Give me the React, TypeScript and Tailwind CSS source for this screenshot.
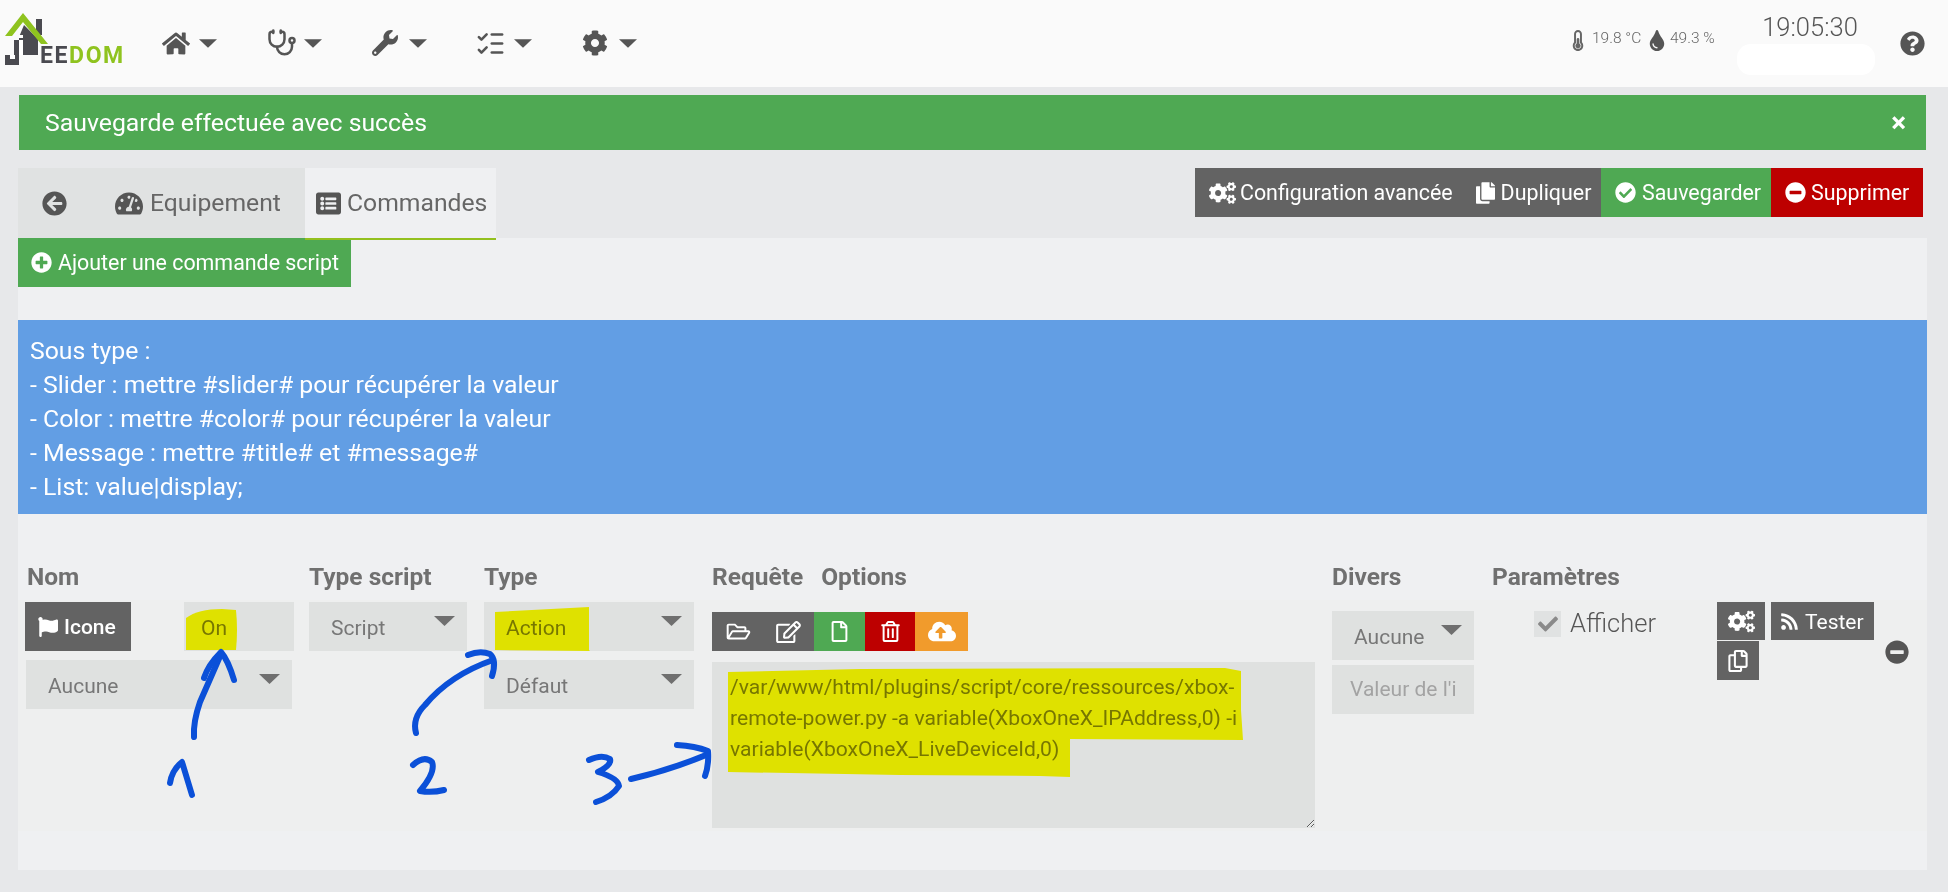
import type { ReactNode } from 'react';
import {
  FaArrowCircleLeft, FaCheck, FaCheckCircle, FaCloudUploadAlt, FaCog, FaCogs, FaCopy, FaFlag, FaHome,
  FaListAlt, FaMinusCircle, FaPlusCircle, FaQuestionCircle, FaRegCopy, FaRegEdit, FaRegFile,
  FaRegFolderOpen, FaRegTrashAlt, FaRss, FaTachometerAlt, FaThermometerHalf, FaTint, FaWrench,
} from 'react-icons/fa';
import { ListChecks, Stethoscope } from 'lucide-react';

const rowGrid = 'grid grid-cols-[284px_175px_228px_620px_160px_225px_1fr] pl-[7px]';

const Caret = ({ className }: { className: string }) => (
  <svg viewBox="0 0 21 10" className={className} fill="currentColor">
    <polygon points="0,0 21,0 10.5,10" />
  </svg>
);

const Logo = () => (
  <div className="relative mt-[-10px] h-[52px] w-[157px] shrink-0">
    <svg viewBox="0 0 50 52" className="absolute left-0 top-0 h-[52px] w-[50px]">
      <rect x="31" y="6" width="6" height="16" fill="#4a4a50" />
      <polygon points="19,12 33,26 33,42 14,42 14,24" fill="#4a4a50" />
      <rect x="14" y="22" width="4" height="3" fill="#fff" />
      <rect x="14" y="27" width="4" height="15" fill="#fff" />
      <rect x="9" y="27" width="5" height="25" fill="#4a4a50" />
      <rect x="0" y="42" width="14" height="10" fill="#4a4a50" />
      <rect x="5" y="42" width="5" height="4" fill="#fff" />
      <polygon points="18,0 43,31 36,31 18,9 7,23 0,23" fill="#8fc31f" />
    </svg>
    <span className="absolute left-[35px] top-[31px] text-[23px] font-bold leading-[23px] tracking-[1.6px] text-[#4a4a50]">
      EE<span className="text-[#8fc31f]">DOM</span>
    </span>
  </div>
);

const NavItem = ({ children }: { children: ReactNode }) => (
  <div className="flex w-[105px] items-center text-[#555555]">
    <div className="flex w-[37px] items-center">{children}</div>
    <Caret className="h-[9px] w-[18px]" />
  </div>
);

const Btn = ({ className, children }: { className: string; children: ReactNode }) => (
  <div className={`flex items-center text-white ${className}`}>{children}</div>
);

const Field = ({ className, label }: { className: string; label: string }) => (
  <div className={`relative flex h-[49px] items-center bg-[#dfe1e0] text-[21px] text-[#777777] ${className}`}>
    <span className="mt-[4px]">{label}</span>
    <Caret className="absolute right-[12px] top-[14px] h-[10px] w-[21px] text-[#6f6f6f]" />
  </div>
);

export default function App() {
  return (
    <div className="relative h-[892px] overflow-hidden bg-[#e7e8ea] font-['Roboto',sans-serif]">
      {/* Navbar */}
      <header className="flex h-[87px] items-center bg-[#fafafa] pl-[5px] pr-[23px]">
        <Logo />
        <nav className="mt-[-1px] flex">
          <NavItem><FaHome className="h-[25px] w-[28px]" /></NavItem>
          <NavItem><Stethoscope className="h-[30px] w-[30px]" strokeWidth={2} /></NavItem>
          <NavItem><FaWrench className="h-[26px] w-[26px]" /></NavItem>
          <NavItem><ListChecks className="ml-[-2px] h-[31px] w-[31px]" strokeWidth={2} /></NavItem>
          <NavItem><FaCog className="h-[26px] w-[26px]" /></NavItem>
        </nav>
        <div className="ml-auto flex items-center text-[#666666]">
          <div className="mt-[-6px] flex items-center text-[15.5px] font-light">
            <FaThermometerHalf className="h-[21px] w-[12px]" />
            <span className="ml-[8px] mt-[-4px] w-[57px]">19.8 °C</span>
            <FaTint className="h-[21px] w-[16px] text-[#555555]" />
            <span className="ml-[5px] mt-[-4px] w-[67px]">49.3 %</span>
          </div>
          <div className="flex w-[138px] flex-col items-center">
            <span className="ml-[8px] text-[25.5px] font-light leading-[30px] text-[#555555]">19:05:30</span>
            <div className="mt-[2px] h-[31px] w-[138px] rounded-[14px] bg-white" />
          </div>
          <FaQuestionCircle className="ml-[25px] h-[25px] w-[25px] text-[#555555]" />
        </div>
      </header>

      <main className="pl-[18px] pr-[21px] pt-[8px]">
        {/* Alert */}
        <div className="mx-px flex h-[55px] items-center justify-between bg-[#4fa953] pl-[26px] pr-[20px] text-white">
          <span className="text-[24.8px]">Sauvegarde effectuée avec succès</span>
          <span className="text-[28px] font-bold">×</span>
        </div>

        {/* Tabs + actions */}
        <div className="mt-[18px] flex h-[70px] justify-between">
          <div className="flex">
            <div className="flex w-[287px] items-center bg-[#e0e2e2] pl-[24px] text-[#666666]">
              <FaArrowCircleLeft className="h-[25px] w-[25px] text-[#555555]" />
              <FaTachometerAlt className="ml-[48px] h-[25px] w-[28px] text-[#555555]" />
              <span className="ml-[7px] text-[24.7px]">Equipement</span>
            </div>
            <div className="z-10 flex h-[72px] w-[191px] items-center border-b-2 border-[#93c01f] bg-[#eff0f2] pl-[11px] text-[#666666]">
              <FaListAlt className="h-[25px] w-[25px] text-[#555555]" />
              <span className="ml-[6px] text-[24.7px]">Commandes</span>
            </div>
          </div>
          <div className="mr-[4px] flex h-[49px] text-[21.4px]">
            <Btn className="w-[406px] bg-[#636363] pl-[14px]">
              <FaCogs className="h-[24px] w-[27px]" />
              <span className="ml-[4px] mt-[2px]">Configuration avancée</span>
              <FaCopy className="ml-[23px] h-[22px] w-[19px]" />
              <span className="ml-[6px] mt-[2px]">Dupliquer</span>
            </Btn>
            <Btn className="w-[170px] bg-[#4fa953] pl-[14px]">
              <FaCheckCircle className="h-[21px] w-[21px]" />
              <span className="ml-[6px] mt-[2px]">Sauvegarder</span>
            </Btn>
            <Btn className="w-[152px] bg-[#bd0000] pl-[14px]">
              <FaMinusCircle className="h-[21px] w-[21px]" />
              <span className="ml-[5px] mt-[2px]">Supprimer</span>
            </Btn>
          </div>
        </div>

        {/* Panel */}
        <section className="h-[632px] bg-[#eff0f2]">
          <Btn className="h-[49px] w-[333px] bg-[#4fa953] pl-[13px] text-[21.4px]">
            <FaPlusCircle className="h-[21px] w-[21px]" />
            <span className="ml-[6px] mt-[2px]">Ajouter une commande script</span>
          </Btn>

          <div className="mt-[33px] h-[194px] bg-[#629ee4] pl-[12px] pt-[14px] text-[24.8px] leading-[34px] text-white">
            <p>Sous type :</p>
            <p>- Slider : mettre #slider# pour récupérer la valeur</p>
            <p>- Color : mettre #color# pour récupérer la valeur</p>
            <p>- Message : mettre #title# et #message#</p>
            <p>- List: value|display;</p>
          </div>

          {/* Command table */}
          <div className={`${rowGrid} h-[86px] items-end pb-[4px] text-[24.5px] font-bold text-[#707070]`}>
            <span className="ml-[2px]">Nom</span>
            <span>Type script</span>
            <span>Type</span>
            <span className="flex">
              <span>Requête</span>
              <span className="ml-[18px]">Options</span>
            </span>
            <span>Divers</span>
            <span>Paramètres</span>
          </div>

          <div className={`${rowGrid} h-[231px] bg-[#eeefef] pt-[2px]`}>
            <div className="w-[269px]">
              <div className="flex justify-between">
                <Btn className="h-[49px] w-[106px] bg-[#636363] pl-[13px] text-[21px] font-medium">
                  <FaFlag className="h-[20px] w-[20px]" />
                  <span className="ml-[6px] mt-[2px]">Icone</span>
                </Btn>
                <div className="flex h-[49px] w-[110px] items-center bg-[#dfe1e0] pl-[17px] text-[21px] text-[#777777]">
                  <span className="mt-[4px]">On</span>
                </div>
              </div>
              <Field className="ml-px mt-[9px] w-[266px] pl-[22px]" label="Aucune" />
            </div>

            <Field className="w-[158px] pl-[22px]" label="Script" />

            <div className="w-[210px]">
              <Field className="pl-[22px]" label="Action" />
              <Field className="mt-[9px] pl-[22px]" label="Défaut" />
            </div>

            <div className="w-[603px] pt-[10px]">
              <div className="flex h-[39px] text-white">
                <div className="flex w-[102px] items-center bg-[#636363] pl-[14px]">
                  <FaRegFolderOpen className="h-[21px] w-[25px]" />
                  <FaRegEdit className="ml-[25px] h-[22px] w-[25px]" />
                </div>
                <div className="flex w-[51px] items-center justify-center bg-[#4fa953]"><FaRegFile className="h-[21px] w-[17px]" /></div>
                <div className="flex w-[50px] items-center justify-center bg-[#bd0000]"><FaRegTrashAlt className="h-[21px] w-[19px]" /></div>
                <div className="flex w-[53px] items-center justify-center bg-[#f19b2c]"><FaCloudUploadAlt className="h-[23px] w-[28px]" /></div>
              </div>
              <textarea
                readOnly
                className="mt-[11px] block h-[166px] w-[603px] bg-[#dfe1e0] pb-0 pl-[18px] pr-[50px] pt-[9px] text-[21.1px] leading-[31px] text-[#777777] outline-none"
                value="/var/www/html/plugins/script/core/ressources/xbox-remote-power.py -a variable(XboxOneX_IPAddress,0) -i variable(XboxOneX_LiveDeviceId,0)"
              />
            </div>

            <div className="w-[142px] pt-[9px]">
              <Field className="pl-[22px]" label="Aucune" />
              <div className="mt-[5px] flex h-[49px] items-center overflow-hidden whitespace-nowrap bg-[#dfe1e0] pl-[18px] text-[21px] text-[#a3a3a3]">
                Valeur de l'i
              </div>
            </div>

            <div className="flex items-start pl-[42px] pt-[9px]">
              <div className="flex h-[26px] w-[27px] items-center justify-center bg-[#e0e2e2]">
                <FaCheck className="h-[20px] w-[24px] text-[#8a8a8a]" />
              </div>
              <span className="ml-[9px] mt-[-1px] text-[25.5px] font-light leading-[26px] text-[#555555]">Afficher</span>
            </div>

            <div className="relative flex w-[195px] flex-wrap content-start text-[21px]">
              <Btn className="h-[38px] w-[48px] justify-center bg-[#636363]"><FaCogs className="h-[23px] w-[27px]" /></Btn>
              <Btn className="ml-[6px] h-[38px] w-[103px] bg-[#636363] pl-[9px]">
                <FaRss className="h-[19px] w-[19px]" />
                <span className="ml-[6px] mt-[3px]">Tester</span>
              </Btn>
              <Btn className="mt-px h-[39px] w-[42px] justify-center bg-[#636363]"><FaRegCopy className="h-[22px] w-[22px]" /></Btn>
              <FaMinusCircle className="absolute left-[168px] top-[38px] h-[24px] w-[24px] text-[#555555]" />
            </div>
          </div>
        </section>
      </main>

      {/* Highlighter marks */}
      <svg className="pointer-events-none absolute left-0 top-0 h-[892px] w-[1948px] mix-blend-multiply" viewBox="0 0 1948 892">
        <g fill="#ffff00">
          <path d="M186 618 Q198 609 222 609 L236 610 Q238 630 236 650 L186 650Z" />
          <path d="M495 612 L589 607 L589 650 L590 651 L495 650Z" />
          <path d="M728 672 L860 669 L1225 668 L1241 671 L1241 710 L1243 740 L1070 739 L1070 777 L1040 776 L900 775 L728 772Z" />
        </g>
      </svg>

      {/* Hand drawn arrows */}
      <svg className="pointer-events-none absolute left-0 top-0 h-[892px] w-[1948px]" viewBox="0 0 1948 892">
        <g fill="none" stroke="#0b50d8" strokeWidth="6" strokeLinecap="round" strokeLinejoin="round">
          <path d="M194 737 Q193 722 200 702 L221 654" />
          <path d="M204 678 Q208 665 221 652 Q228 660 234 680" />
          <path d="M170 783 Q172 770 182 762 Q186 775 192 795" />
          <path d="M416 733 Q412 718 425 705 Q450 675 493 660" />
          <path d="M468 655 Q480 650 490 654 Q497 660 492 676" />
          <path d="M413 765 Q424 755 432 762 Q436 772 420 791 Q432 793 444 790" />
          <path d="M589 760 Q602 754 610 759 Q612 765 598 772 Q618 778 619 786 Q612 797 596 802" />
          <path d="M631 779 Q670 770 706 755" />
          <path d="M677 745 Q695 746 708 751 Q709 765 705 776" />
        </g>
      </svg>
    </div>
  );
}
